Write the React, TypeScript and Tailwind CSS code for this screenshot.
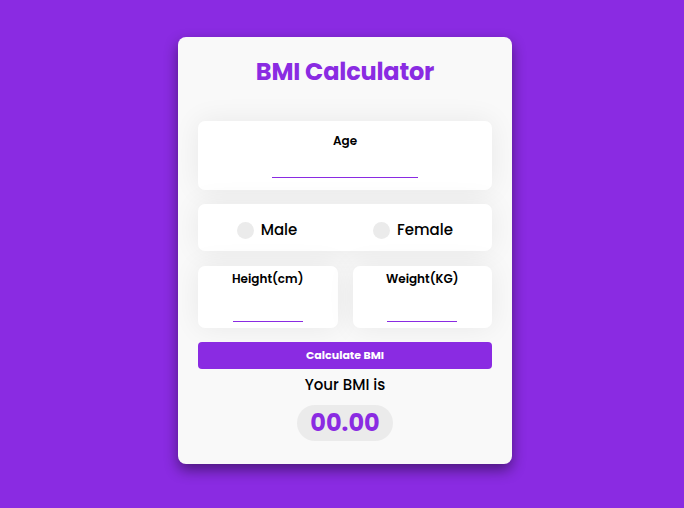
import { useState } from 'react';

export default function App() {
  const [age, setAge] = useState('');
  const [gender, setGender] = useState('');
  const [height, setHeight] = useState('');
  const [weight, setWeight] = useState('');
  const [bmi, setBmi] = useState('00.00');

  function calculate() {
    const h = parseFloat(height) / 100;
    const w = parseFloat(weight);
    if (!h || !w) return;
    setBmi((w / (h * h)).toFixed(2));
  }

  return (
    <div className="min-h-[508px] bg-[#8a2be2] flex justify-center pt-[37px] pl-[6px] font-['Poppins','Inter',sans-serif]">
      <div className="w-[334px] h-[427px] bg-[#f9f9f9] rounded-[8px] shadow-[0_6px_14px_rgba(0,0,0,0.45)] px-[20px] flex flex-col">
        <h1 className="text-[24px] leading-[36px] font-bold text-[#8a2be2] text-center mt-[17px] tracking-[-0.2px]">
          BMI Calculator
        </h1>

        {/* Age */}
        <div className="mt-[31px] h-[69px] bg-white rounded-[7px] shadow-[0_0_28px_rgba(0,0,0,0.07)] flex flex-col items-center pt-[12px]">
          <label className="text-[12px] leading-[16px] font-semibold text-black">Age</label>
          <input
            value={age}
            onChange={(e) => setAge(e.target.value)}
            className="mt-[9px] w-[146px] h-[20px] border-b border-[#8a2be2] outline-none bg-transparent text-center text-[12px]"
          />
        </div>

        {/* Gender */}
        <div className="mt-[14px] h-[47px] bg-white rounded-[7px] shadow-[0_0_28px_rgba(0,0,0,0.07)] flex items-center pt-[6px]">
          <label className="flex-1 flex items-center justify-center gap-[7px] pr-[8px] cursor-pointer" onClick={() => setGender('male')}>
            <span className={`w-[17px] h-[17px] rounded-full ${gender === 'male' ? 'bg-[#8a2be2]' : 'bg-[#ebebeb]'}`}></span>
            <span className="text-[15px] font-medium text-black">Male</span>
          </label>
          <label className="flex-1 flex items-center justify-center gap-[7px] pr-[10px] cursor-pointer" onClick={() => setGender('female')}>
            <span className={`w-[17px] h-[17px] rounded-full ${gender === 'female' ? 'bg-[#8a2be2]' : 'bg-[#ebebeb]'}`}></span>
            <span className="text-[15px] font-medium text-black">Female</span>
          </label>
        </div>

        {/* Height / Weight */}
        <div className="mt-[15px] grid grid-cols-2 gap-[15px]">
          <div className="h-[62px] bg-white rounded-[7px] shadow-[0_0_28px_rgba(0,0,0,0.07)] flex flex-col items-center pt-[5px]">
            <label className="text-[12px] leading-[16px] font-semibold text-black">Height(cm)</label>
            <input
              value={height}
              onChange={(e) => setHeight(e.target.value)}
              className="mt-[15px] w-[70px] h-[20px] border-b border-[#8a2be2] outline-none bg-transparent text-center text-[12px]"
            />
          </div>
          <div className="h-[62px] bg-white rounded-[7px] shadow-[0_0_28px_rgba(0,0,0,0.07)] flex flex-col items-center pt-[5px]">
            <label className="text-[12px] leading-[16px] font-semibold text-black">Weight(KG)</label>
            <input
              value={weight}
              onChange={(e) => setWeight(e.target.value)}
              className="mt-[15px] w-[70px] h-[20px] border-b border-[#8a2be2] outline-none bg-transparent text-center text-[12px]"
            />
          </div>
        </div>

        <button
          onClick={calculate}
          className="mt-[14px] h-[27px] w-full bg-[#8a2be2] rounded-[4px] text-white text-[11px] font-bold"
        >
          Calculate BMI
        </button>

        <p className="mt-[6px] text-center text-[15px] leading-[20px] font-medium text-black">Your BMI is</p>

        <div className="mt-[10px] self-center w-[96px] h-[36px] rounded-full bg-[#ebebeb] flex items-center justify-center">
          <span className="text-[24px] font-bold text-[#8a2be2]">{bmi}</span>
        </div>
      </div>
    </div>
  );
}
